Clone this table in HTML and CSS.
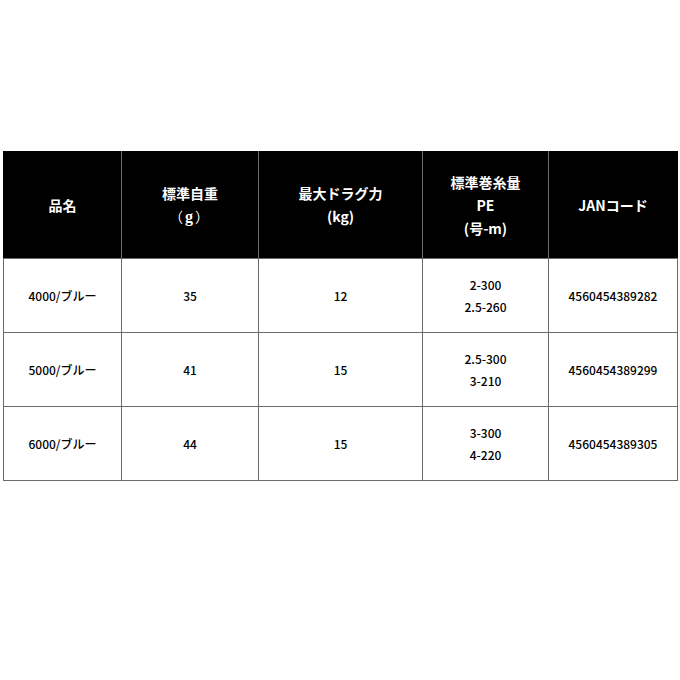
FILE: index.html
```html
<!DOCTYPE html>
<html lang="ja">
<head>
<meta charset="utf-8">
<link rel="stylesheet" href="styles.css">
</head>
<body>
<div class="wrap">
<table class="spec">
  <colgroup>
    <col class="c1"><col class="c2"><col class="c3"><col class="c4"><col class="c5">
  </colgroup>
  <thead>
    <tr>
      <th>品名</th>
      <th>標準自重<br><span class="unit">（<span class="serif">g</span>）</span></th>
      <th>最大ドラグ力<br>(kg)</th>
      <th>標準巻糸量<br>PE<br>(号-m)</th>
      <th>JANコード</th>
    </tr>
  </thead>
  <tbody>
    <tr>
      <td>4000/ブルー</td><td>35</td><td>12</td><td>2-300<br>2.5-260</td><td>4560454389282</td>
    </tr>
    <tr>
      <td>5000/ブルー</td><td>41</td><td>15</td><td>2.5-300<br>3-210</td><td>4560454389299</td>
    </tr>
    <tr>
      <td>6000/ブルー</td><td>44</td><td>15</td><td>3-300<br>4-220</td><td>4560454389305</td>
    </tr>
  </tbody>
</table>
</div>
</body>
</html>
```

FILE: styles.css
```css
html, body {
  margin: 0;
  padding: 0;
  background: #ffffff;
}
body {
  font-family: "Noto Sans CJK JP", "Noto Sans", sans-serif;
  color: #000000;
}
.wrap {
  padding: 151px 0 0 3px;
}
.spec {
  border-collapse: collapse;
  table-layout: fixed;
  width: 674px;
}
.c1 { width: 118px; }
.c2 { width: 137px; }
.c3 { width: 164px; }
.c4 { width: 126px; }
.c5 { width: 129px; }
.spec th {
  background: #000000;
  color: #ffffff;
  font-size: 14px;
  font-weight: bold;
  line-height: 23px;
  height: 106px;
  padding: 0;
  text-align: center;
  vertical-align: middle;
  border: 1px solid #6b6b6b;
  border-top-color: #000;
}
.spec th:first-child { border-left-color: #000; }
.spec th:last-child { border-right-color: #000; }
.unit {
  font-weight: normal;
  letter-spacing: 2px;
}
.serif {
  font-family: "Liberation Serif", serif;
  font-size: 16px;
  font-weight: bold;
}
.spec td {
  font-size: 12px;
  font-weight: 500;
  line-height: 22px;
  height: 73px;
  padding: 0;
  text-align: center;
  vertical-align: middle;
  border: 1px solid #6b6b6b;
}
```
